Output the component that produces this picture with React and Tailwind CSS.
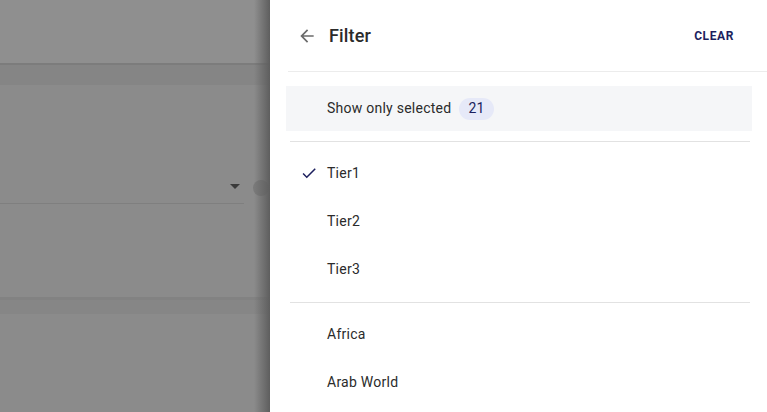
import React from "react";

const regions = ["Tier1", "Tier2", "Tier3"];
const places = ["Africa", "Arab World"];

const Check = () => (
  <svg width="18" height="18" viewBox="0 0 24 24" fill="#1c1f5e">
    <path d="M9 16.17 4.83 12l-1.42 1.41L9 19 21 7l-1.41-1.41z" />
  </svg>
);

const BackArrow = () => (
  <svg width="20" height="20" viewBox="0 0 24 24" fill="#6b6b6b">
    <path d="M20 11H7.83l5.59-5.59L12 4l-8 8 8 8 1.41-1.41L7.83 13H20v-2z" />
  </svg>
);

const App = () => {
  return (
    <div className="flex w-[767px] h-[412px] overflow-hidden" style={{ fontFamily: "Roboto, 'Liberation Sans', sans-serif" }}>
      {/* dimmed page behind the drawer */}
      <div className="relative flex-1 flex flex-col bg-[#8b8b8b]">
        <div className="h-[63px] bg-[#8f8f8f]" />
        <div className="h-[2px] bg-[#7c7c7c]" />
        <div className="h-[20px] bg-[#858585]" />
        <div className="h-[85px]" />
        <div className="flex items-center h-[34px] w-[244px] border-b border-[#7f7f7f]">
          <div className="flex-1" />
          <div className="w-0 h-0 mr-[4px] border-l-[5px] border-r-[5px] border-t-[5px] border-l-transparent border-r-transparent border-t-[#3a3a3a]" />
        </div>
        <div className="h-[93px]" />
        <div className="h-[3px] bg-[#828282]" />
        <div className="h-[14px] bg-[#868686]" />
        <div className="flex-1" />
        <div className="absolute left-[253px] top-[180px] w-[16px] h-[16px] rounded-full bg-[#7a7a7a]" />
        <div className="absolute right-0 top-0 bottom-0 w-[16px] bg-gradient-to-r from-transparent to-[#5e5e5e]" />
      </div>

      {/* drawer */}
      <div className="w-[497px] h-full bg-white flex flex-col tracking-[0.25px]">
        <div className="flex items-center h-[72px] ml-[18px] pl-[9px] pr-[33px] border-b border-[#ececec]">
          <BackArrow />
          <span className="ml-[12px] text-[18px] font-medium tracking-[0.15px] text-[#2b2b2b]">Filter</span>
          <div className="flex-1" />
          <span className="text-[12px] font-bold tracking-[0.6px] text-[#1c1f5e]">CLEAR</span>
        </div>

        <div className="mt-[14px] ml-[16px] mr-[15px] h-[45px] bg-[#f5f6f8] flex items-center pl-[41px]">
          <span className="text-[14px] text-[#2b2b2b]">Show only selected</span>
          <span className="ml-[8px] px-[9px] h-[22px] rounded-full bg-[#e6e9f8] text-[14px] text-[#1c1f5e] flex items-center">21</span>
        </div>

        <div className="mt-[10px] ml-[20px] mr-[17px] border-t border-[#e2e2e2]" />

        <div className="flex flex-col pt-[7px]">
          {regions.map((r, i) => (
            <div key={r} className="h-[48px] flex items-center pl-[30px]">
              <div className="w-[18px] flex items-center">{i === 0 && <Check />}</div>
              <span className="ml-[9px] text-[14px] text-[#2b2b2b]">{r}</span>
            </div>
          ))}
        </div>

        <div className="mt-[9px] ml-[20px] mr-[17px] border-t border-[#e2e2e2]" />

        <div className="flex flex-col pt-[7px]">
          {places.map((p) => (
            <div key={p} className="h-[48px] flex items-center pl-[57px]">
              <span className="text-[14px] text-[#2b2b2b]">{p}</span>
            </div>
          ))}
        </div>
      </div>
    </div>
  );
};

export default App;
